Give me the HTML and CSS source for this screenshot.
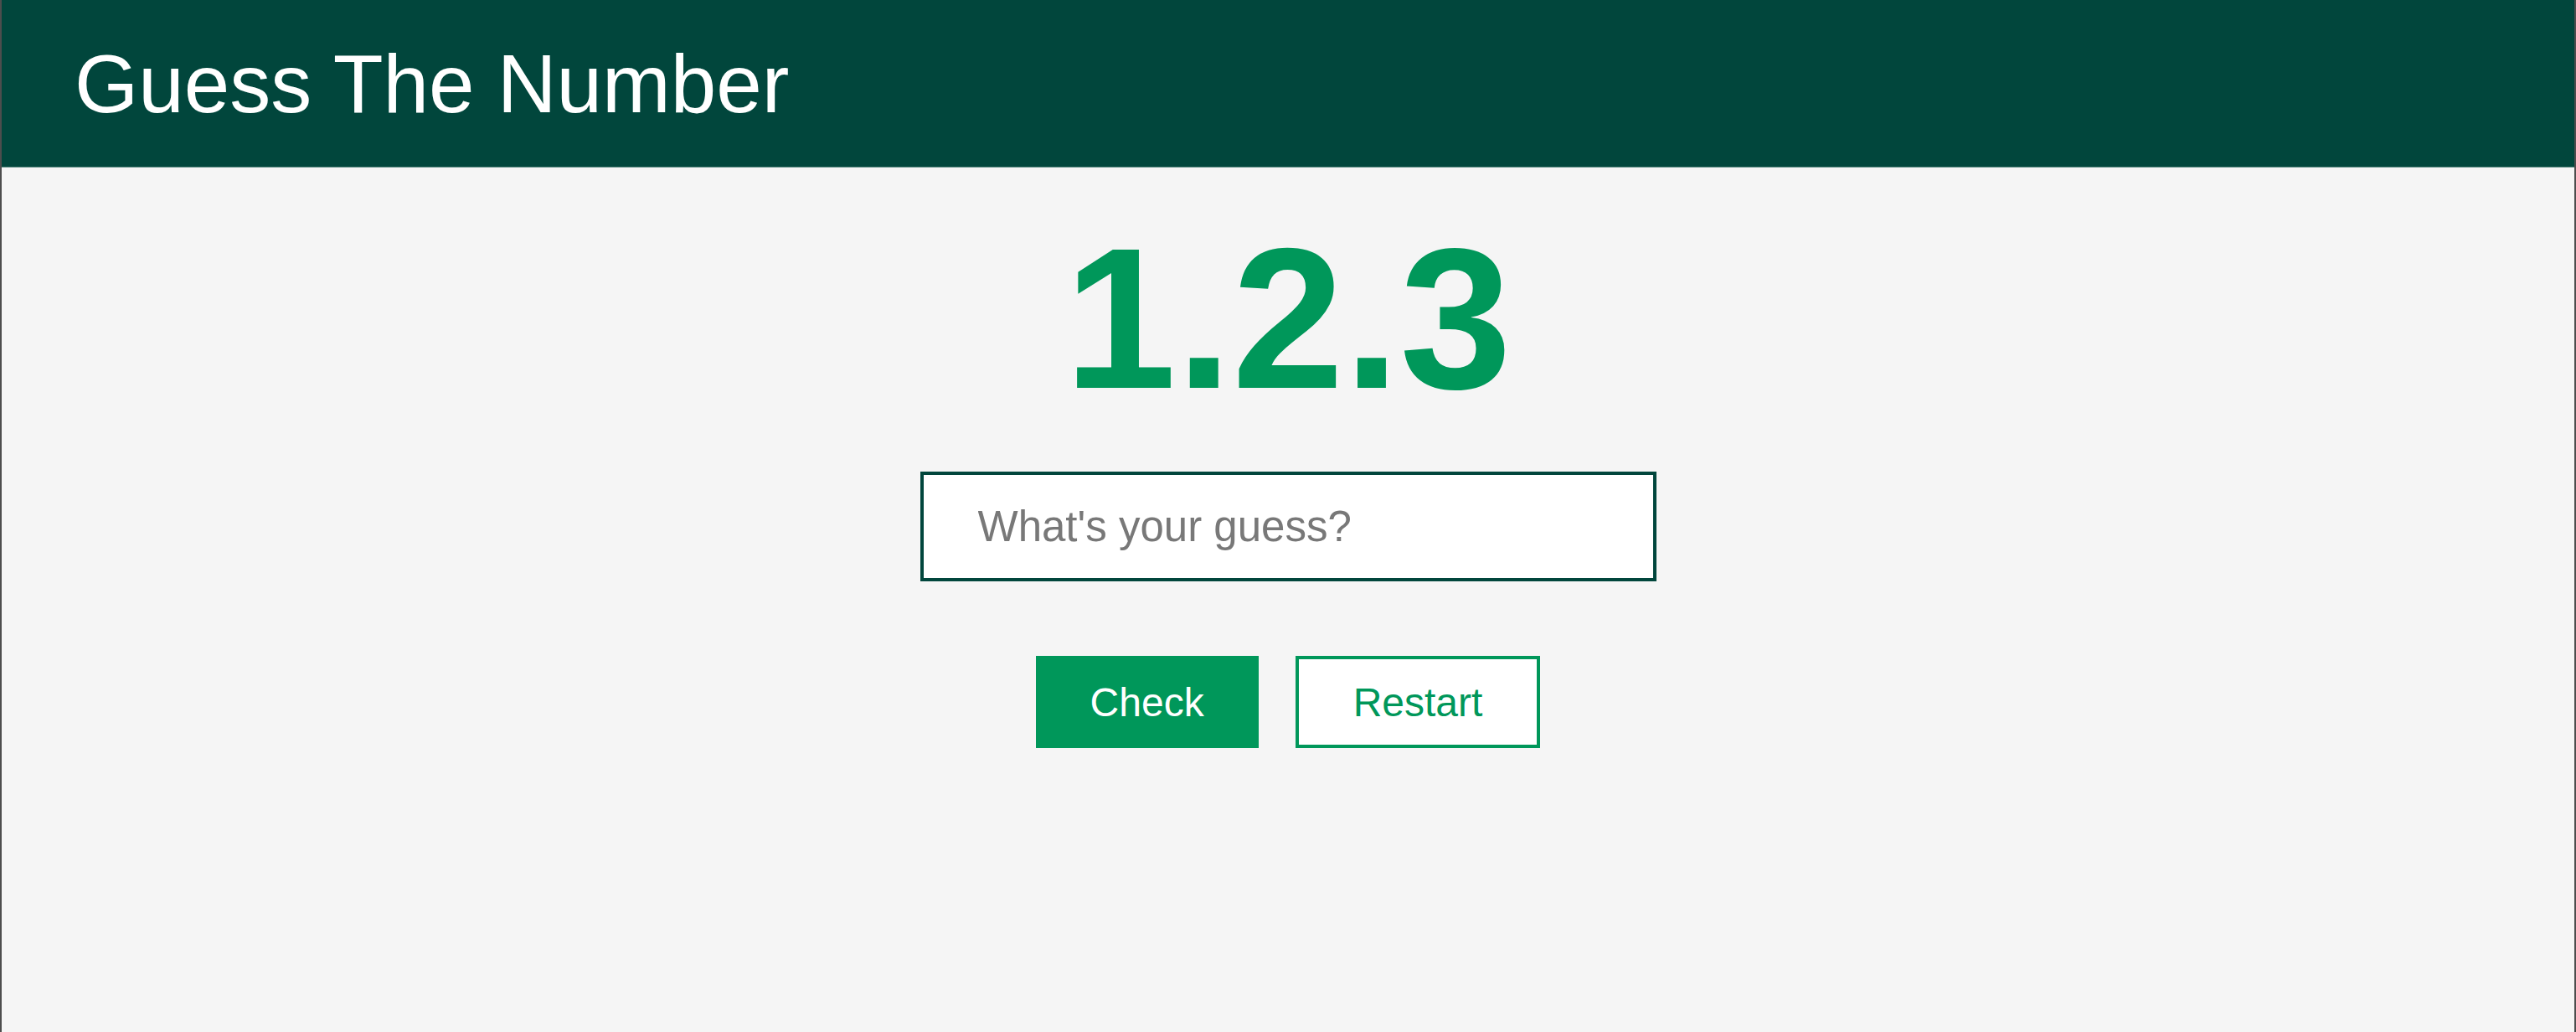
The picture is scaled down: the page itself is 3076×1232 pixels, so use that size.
FILE: index.html
```html
<!DOCTYPE html>
<html lang="en">
<head>
<meta charset="utf-8">
<title>Guess The Number</title>
<link rel="stylesheet" href="styles.css">
</head>
<body>
<div class="page">
  <header class="topbar">
    <h1 class="title">Guess The Number</h1>
  </header>
  <main class="game">
    <div class="number">1.2.3</div>
    <input class="guess" type="text" placeholder="What's your guess?">
    <div class="actions">
      <button class="btn btn-check" type="button">Check</button>
      <button class="btn btn-restart" type="button">Restart</button>
    </div>
  </main>
</div>
</body>
</html>
```
FILE: styles.css
```css
html, body {
  margin: 0;
  padding: 0;
  height: 100%;
}
body {
  font-family: "Liberation Sans", Arial, sans-serif;
  background: #f5f5f5;
}
.page {
  box-sizing: border-box;
  min-height: 100vh;
  border-left: 2px solid #4d4d4d;
  border-right: 2px solid #4d4d4d;
  background: #f5f5f5;
  display: flex;
  flex-direction: column;
}
.topbar {
  height: 200px;
  background: #01463c;
  display: flex;
  align-items: center;
  padding-left: 87px;
  border-bottom: 1px solid #5f8c84;
  box-sizing: border-box;
}
.title {
  margin: 0;
  color: #ffffff;
  font-weight: 400;
  font-size: 98px;
  line-height: 1;
}
.game {
  display: flex;
  flex-direction: column;
  align-items: center;
}
.number {
  margin-top: 60px;
  font-family: "Liberation Sans", Arial, sans-serif;
  font-size: 240px;
  line-height: 240px;
  font-weight: 700;
  color: #00975a;
}
.guess {
  box-sizing: border-box;
  margin-top: 63px;
  width: 879px;
  height: 131px;
  border: 4px solid #01463c;
  background: #ffffff;
  padding: 0 60px 0 65px;
  font-family: "Liberation Sans", Arial, sans-serif;
  font-size: 51px;
  color: #333333;
  outline: none;
}
.guess::placeholder {
  color: #787878;
}
.actions {
  margin-top: 89px;
  display: flex;
  gap: 44px;
}
.btn {
  box-sizing: border-box;
  height: 110px;
  padding: 0 65px;
  font-family: "Liberation Sans", Arial, sans-serif;
  font-size: 48px;
  cursor: pointer;
}
.btn-check {
  background: #00975a;
  color: #ffffff;
  border: 0;
}
.btn-restart {
  background: #ffffff;
  color: #00975a;
  border: 4px solid #00975a;
}
```
